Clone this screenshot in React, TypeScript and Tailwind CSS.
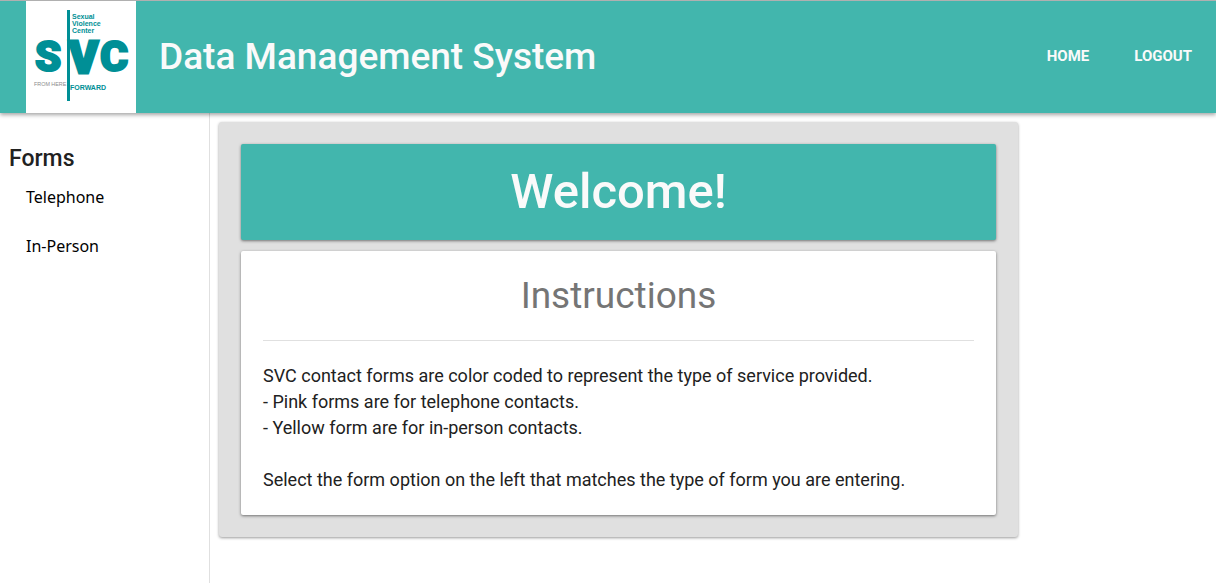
import React from "react";

function Logo() {
  return (
    <svg
      viewBox="0 0 110 112"
      className="block h-28 w-[110px] bg-white"
      role="img"
      aria-label="Sexual Violence Center"
      fontFamily="'Liberation Sans', Arial, sans-serif"
      fill="#008f96"
    >
      <g fontSize="7" fontWeight="700">
        <text x="46" y="18">Sexual</text>
        <text x="46" y="25">Violence</text>
        <text x="46" y="32">Center</text>
        <text x="44" y="89">FORWARD</text>
      </g>
      <g fontFamily="Roboto, sans-serif" fontWeight="900" stroke="#008f96" strokeWidth="2">
        <text x="9" y="70" fontSize="42">S</text>
        <text x="43" y="72" fontSize="44" strokeWidth="3">V</text>
        <text x="74" y="70" fontSize="43">C</text>
      </g>
      <rect x="41" y="9" width="3" height="91" />
      <text x="8" y="85" fontSize="5.4" fill="#8c8c8c">FROM HERE</text>
    </svg>
  );
}

export default function App() {
  return (
    <div className="flex min-h-screen flex-col bg-white font-[Roboto,sans-serif] text-[#212121]">
      <header className="z-10 flex items-center border-t border-[#b0b0b0] bg-[#42b6ad] pl-[26px] text-[#fafafa] shadow-[0_2px_4px_rgba(0,0,0,0.35)]">
        <a href="#home" aria-label="SVC home">
          <Logo />
        </a>
        <h1 className="ml-[23px] text-[37px] leading-[48px] font-medium">Data Management System</h1>
        <nav className="ml-auto flex gap-[45px] pr-6 pb-0.5 text-[15px] leading-6 font-bold">
          <a href="#home">HOME</a>
          <a href="#logout">LOGOUT</a>
        </nav>
      </header>
      <div className="flex flex-1 items-stretch">
        <aside className="w-[210px] shrink-0 border-r border-[#e0e0e0] pt-8">
          <h2 className="pl-[9px] text-[23px] leading-7 font-medium">Forms</h2>
          <ul className="pl-[26px] font-['Noto_Sans',sans-serif] text-base text-black">
            <li className="h-[49px] leading-[49px]"><a href="#telephone">Telephone</a></li>
            <li className="h-[49px] leading-[49px]"><a href="#in-person">In-Person</a></li>
          </ul>
        </aside>
        <main className="min-w-0 flex-1 pt-[9px] pl-[9px]">
          <div className="max-w-[799px] rounded-[3px] bg-[#e0e0e0] p-[22px] shadow-[0_1px_3px_rgba(0,0,0,0.4)]">
            <div className="rounded-[2px] bg-[#42b6ad] py-4 text-center text-[#fafafa] shadow-[0_1px_3px_rgba(0,0,0,0.5)]">
              <h2 className="text-[49px] leading-[64px] font-medium">Welcome!</h2>
            </div>
            <section className="mt-[11px] rounded-[2px] bg-white p-[22px] shadow-[0_1px_3px_rgba(0,0,0,0.5)]">
              <h3 className="pb-[22px] text-center text-[37px] leading-[45px] text-[#757575]">Instructions</h3>
              <hr className="border-[#e0e0e0]" />
              <div className="pt-[22px] text-[18px] leading-[26px]">
                <p>SVC contact forms are color coded to represent the type of service provided.</p>
                <p>- Pink forms are for telephone contacts.</p>
                <p>- Yellow form are for in-person contacts.</p>
                <p className="mt-[26px]">Select the form option on the left that matches the type of form you are entering.</p>
              </div>
            </section>
          </div>
        </main>
      </div>
    </div>
  );
}
